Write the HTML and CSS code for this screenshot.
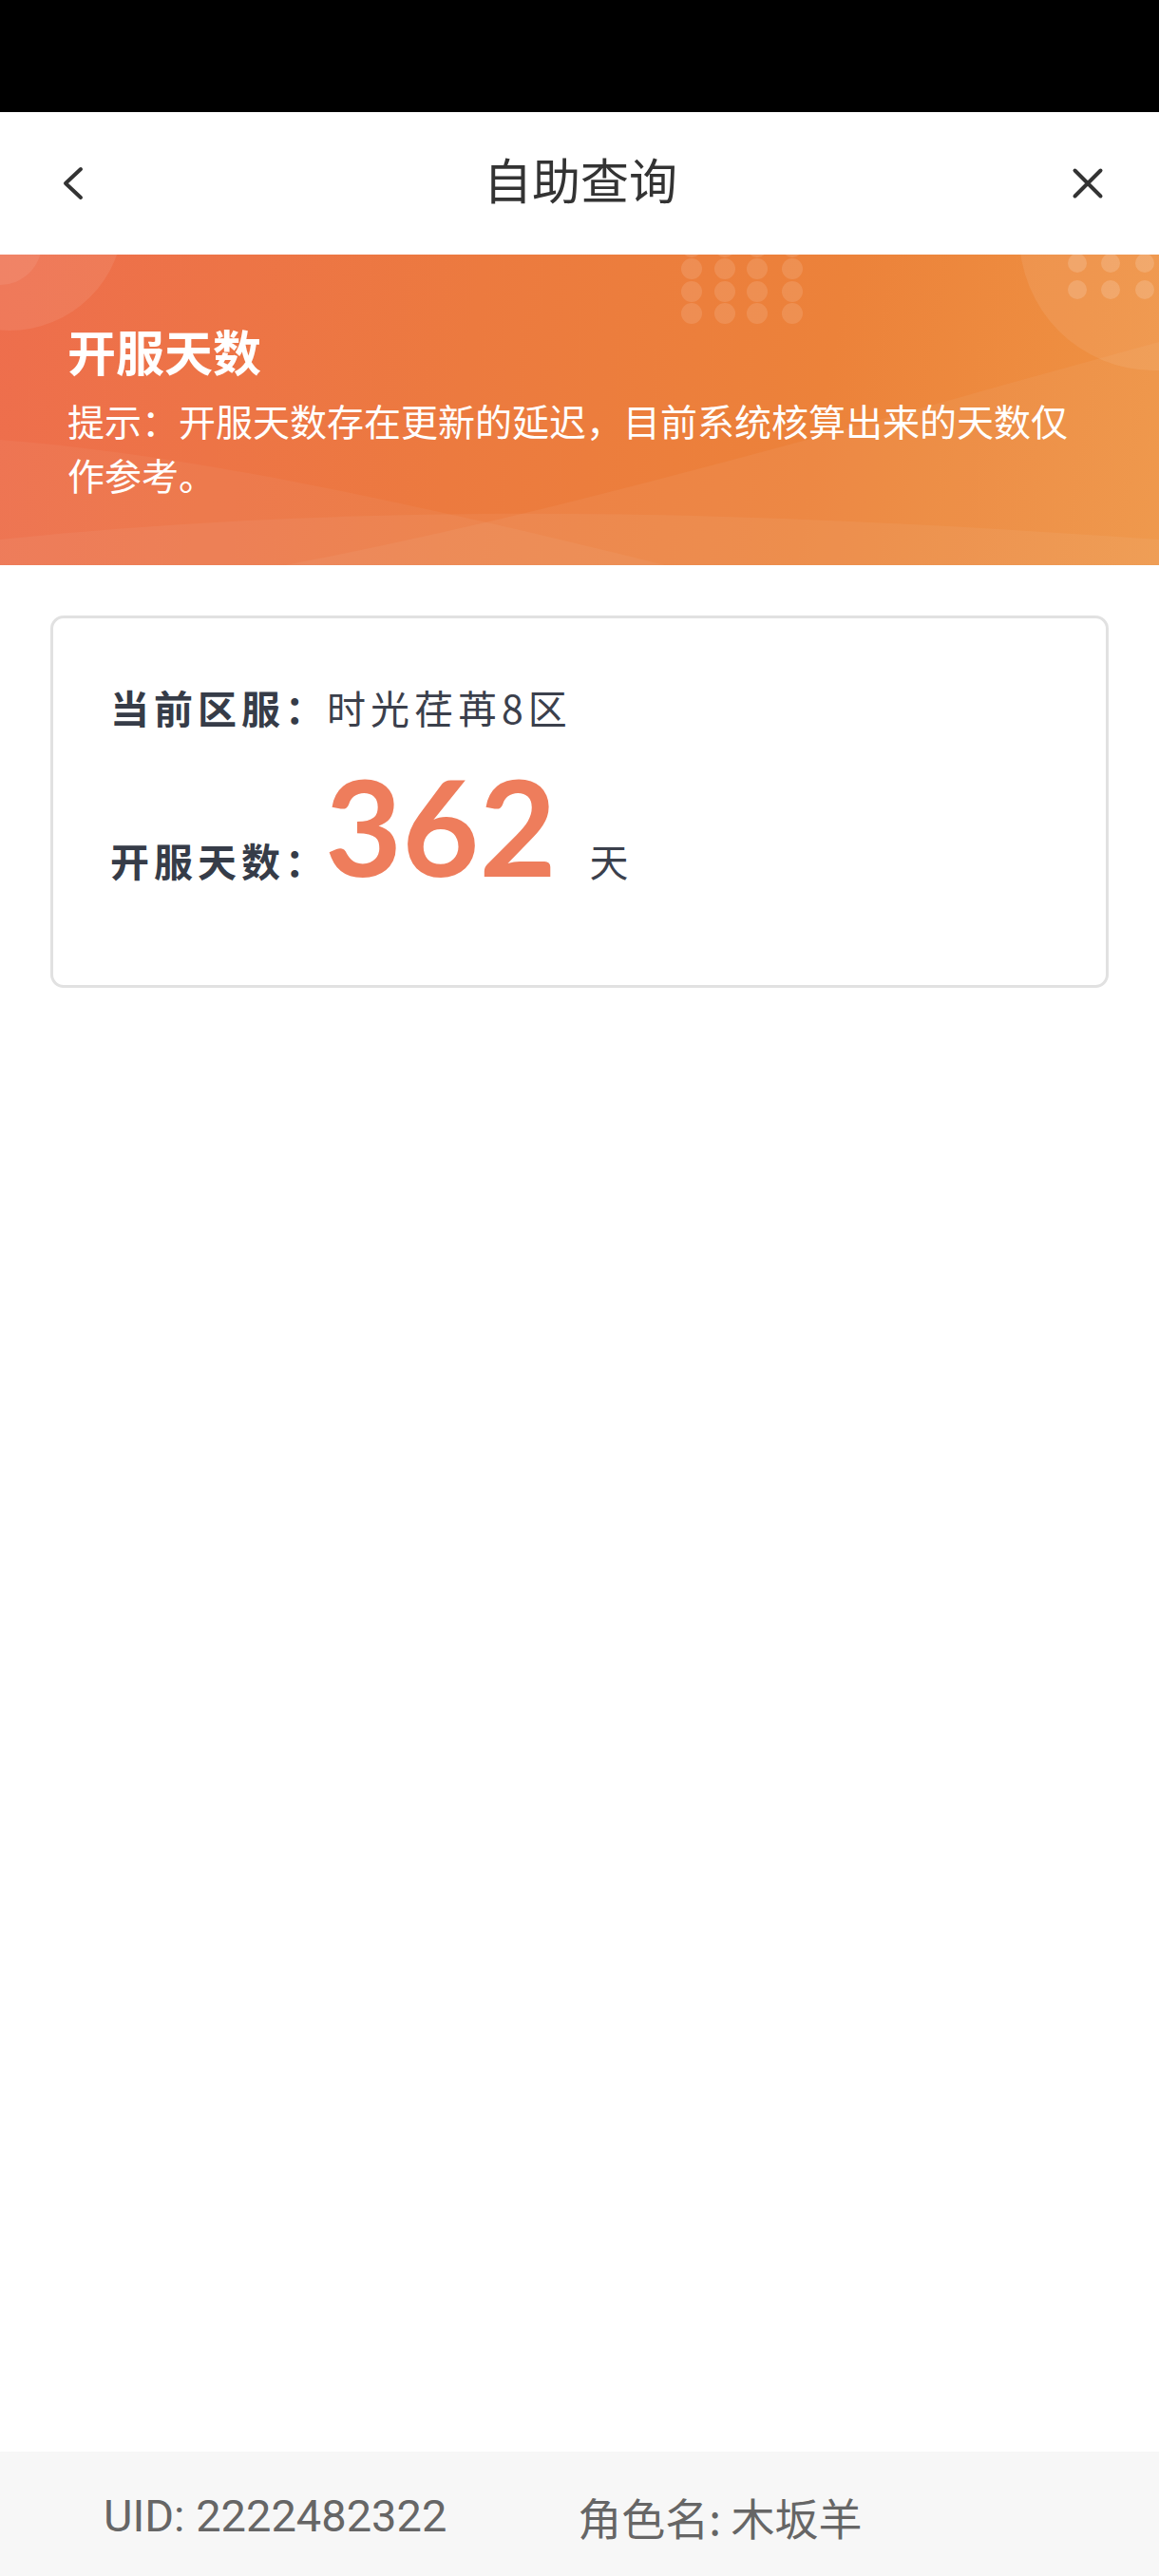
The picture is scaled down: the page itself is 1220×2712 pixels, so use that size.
FILE: index.html
```html
<!DOCTYPE html>
<html lang="zh-CN">
<head>
<meta charset="utf-8">
<title>自助查询</title>
<link rel="stylesheet" href="styles.css">
</head>
<body>
<div class="page">
  <div class="status-bar"></div>
  <header class="nav">
    <svg class="nav-icon" viewBox="0 0 40 40" width="40" height="40"><path d="M28 5 L12 20 L28 35" fill="none" stroke="#333" stroke-width="4" stroke-linecap="round" stroke-linejoin="round"/></svg>
    <h1 class="nav-title">自助查询</h1>
    <svg class="nav-icon" viewBox="0 0 40 40" width="40" height="40"><path d="M6.5 6.5 L33.5 33.5 M33.5 6.5 L6.5 33.5" fill="none" stroke="#333" stroke-width="4" stroke-linecap="round"/></svg>
  </header>
  <section class="banner">
    <svg class="banner-deco" viewBox="0 0 1220 327" preserveAspectRatio="none" width="1220" height="327">
      <circle cx="10" cy="-40" r="120" fill="#fff" fill-opacity="0.08"/>
      <circle cx="0" cy="-12" r="44" fill="#fff" fill-opacity="0.08"/>
      <circle cx="1215" cy="-20" r="142" fill="#fff" fill-opacity="0.08"/>
      <path d="M0 195 C 200 210, 450 265, 700 327 L0 327 Z" fill="#fff" fill-opacity="0.045"/>
      <path d="M300 327 C 600 270, 900 180, 1220 92 L1220 327 Z" fill="#fff" fill-opacity="0.05"/>
      <path d="M0 300 C 400 258, 800 270, 1220 300 L1220 327 L0 327 Z" fill="#fff" fill-opacity="0.05"/>
      <g fill="#fff" fill-opacity="0.12">
        <circle cx="728" cy="-8" r="11"/><circle cx="763" cy="-8" r="11"/><circle cx="797" cy="-8" r="11"/><circle cx="834" cy="-8" r="11"/>
        <circle cx="728" cy="15" r="11"/><circle cx="763" cy="15" r="11"/><circle cx="797" cy="15" r="11"/><circle cx="834" cy="15" r="11"/>
        <circle cx="728" cy="39" r="11"/><circle cx="763" cy="39" r="11"/><circle cx="797" cy="39" r="11"/><circle cx="834" cy="39" r="11"/>
        <circle cx="728" cy="62" r="11"/><circle cx="763" cy="62" r="11"/><circle cx="797" cy="62" r="11"/><circle cx="834" cy="62" r="11"/>
      </g>
      <g fill="#fff" fill-opacity="0.16">
        <circle cx="1134" cy="9" r="10"/><circle cx="1169" cy="9" r="10"/><circle cx="1205" cy="9" r="10"/>
        <circle cx="1134" cy="37" r="10"/><circle cx="1169" cy="37" r="10"/><circle cx="1205" cy="37" r="10"/>
      </g>
    </svg>
    <h2 class="banner-title">开服天数</h2>
    <p class="banner-hint">提示：开服天数存在更新的延迟，目前系统核算出来的天数仅作参考。</p>
  </section>
  <main class="content">
    <div class="card">
      <div class="row">
        <span class="label">当前区服：</span><span class="value">时光荏苒8区</span>
      </div>
      <div class="row row-days">
        <span class="label">开服天数：</span><span class="days">362</span><span class="unit">天</span>
      </div>
    </div>
  </main>
  <footer class="footer">
    <span class="uid">UID: 2222482322</span>
    <span class="role">角色名: 木坂羊</span>
  </footer>
</div>
</body>
</html>
```

FILE: styles.css
```css
* {
  box-sizing: border-box;
}

html, body {
  margin: 0;
  padding: 0;
  background: #fff;
}

body {
  font-family: "Noto Sans CJK SC", "Noto Sans", sans-serif;
  color: #333;
}

.page {
  width: 1220px;
  min-height: 2712px;
  display: flex;
  flex-direction: column;
}

.status-bar {
  height: 118px;
  background: #000;
  flex: none;
}

.nav {
  height: 150px;
  flex: none;
  display: flex;
  align-items: center;
  justify-content: space-between;
  padding: 0 55px 0 57px;
  background: #fff;
}

.nav-icon {
  display: block;
  flex: none;
}

.nav-title {
  margin: 0 0 10px;
  font-size: 51px;
  font-weight: 400;
  line-height: 60px;
  color: #333;
}

.banner {
  position: relative;
  overflow: hidden;
  flex: none;
  height: 327px;
  padding: 71px 70px 0 71px;
  background: linear-gradient(100deg, #ee6e4d 0%, #ec7a3f 40%, #ec823a 70%, #ef9444 100%);
  color: #fff;
}

.banner-deco {
  position: absolute;
  left: 0;
  top: 0;
  display: block;
}

.banner-title {
  position: relative;
  margin: 0;
  font-size: 51px;
  font-weight: 700;
  line-height: 61px;
}

.banner-hint {
  position: relative;
  margin: 14px 0 0;
  font-size: 39px;
  line-height: 57px;
  font-weight: 400;
}

.content {
  padding: 53px 53px 0;
}

.card {
  border: 3px solid #e1e1e1;
  border-radius: 14px;
  padding: 67px 60px 98px;
  background: #fff;
}

.row {
  display: flex;
  align-items: baseline;
  font-size: 41px;
  line-height: 52px;
  letter-spacing: 5px;
  color: #363c48;
}

.label {
  font-weight: 700;
}

.value {
  margin-left: -2px;
  font-weight: 400;
  color: #3b404c;
}

.row-days {
  margin-top: 29px;
}

.days {
  margin-left: -4px;
  font-family: Lato, "Open Sans", sans-serif;
  font-weight: 700;
  font-size: 140px;
  line-height: 140px;
  letter-spacing: 0;
  color: #ee7d5c;
}

.unit {
  margin-left: 35px;
  font-weight: 400;
  color: #3b404c;
}

.footer {
  margin-top: auto;
  height: 131px;
  flex: none;
  display: flex;
  align-items: center;
  padding: 4px 0 0 109px;
  background: #f7f7f7;
  color: #666;
  font-family: Roboto, "Noto Sans CJK SC", sans-serif;
  font-size: 47px;
}

.uid {
  font-size: 47px;
}

.role {
  margin-left: 138px;
  font-family: "Noto Sans CJK SC", Roboto, sans-serif;
  font-size: 46px;
}
```
